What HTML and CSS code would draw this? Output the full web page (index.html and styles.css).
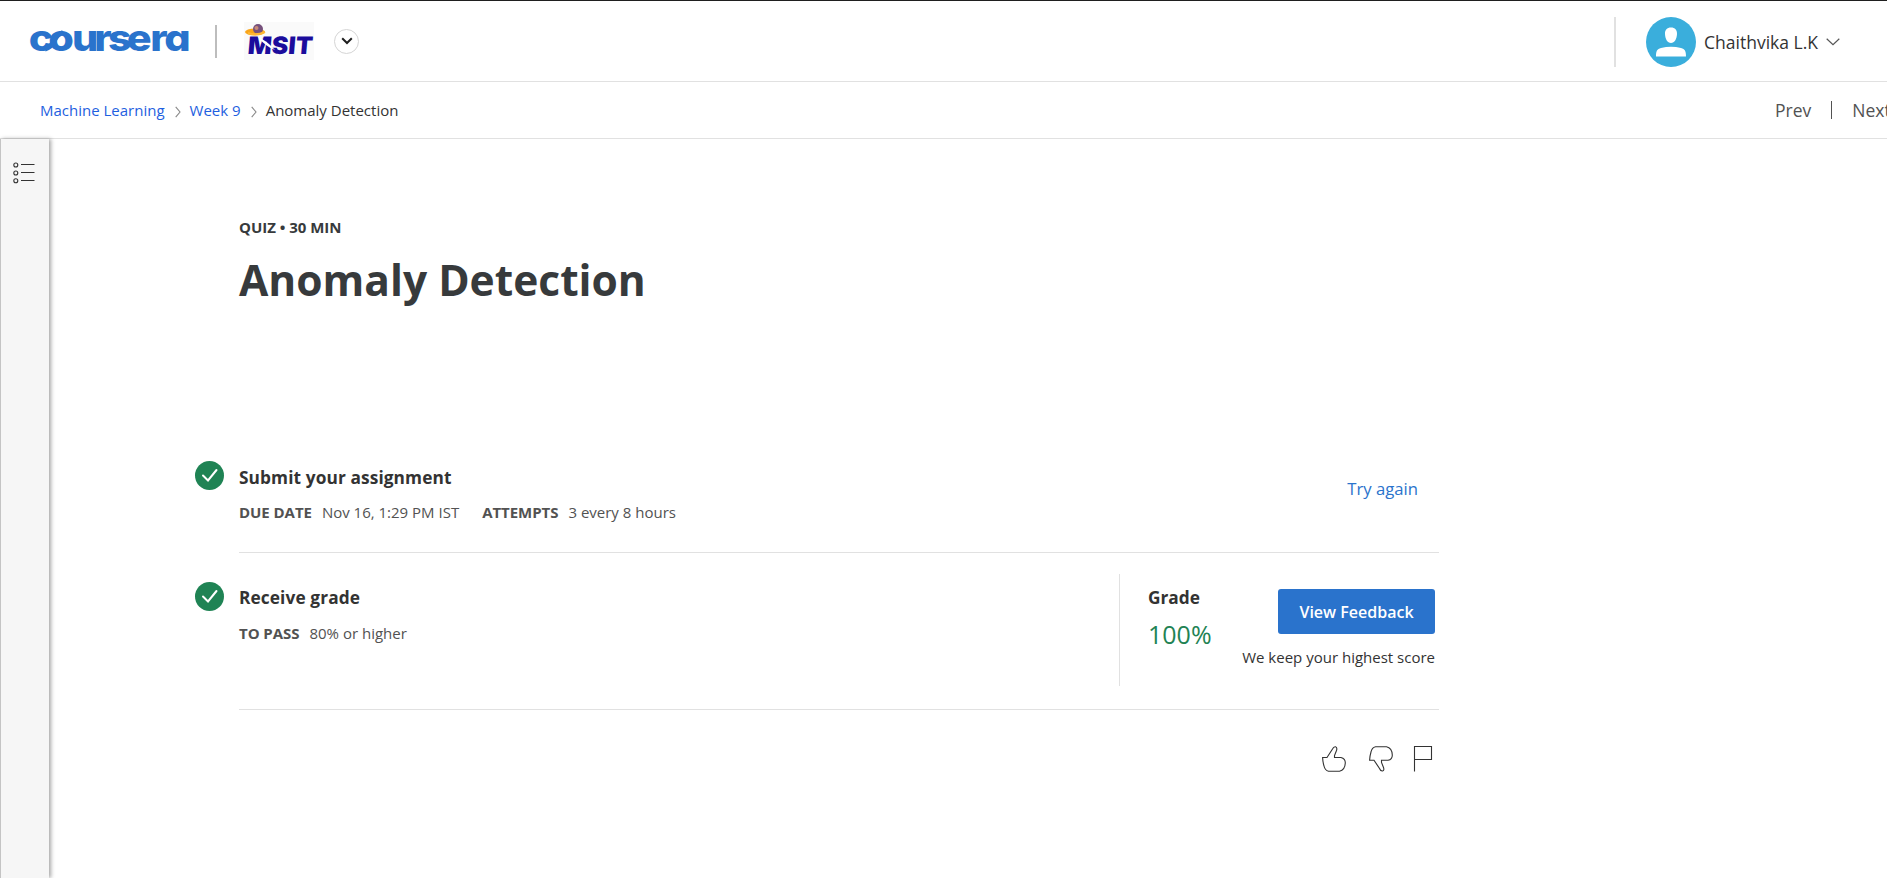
FILE: index.html
```html
<!DOCTYPE html>
<html lang="en">
<head>
<meta charset="utf-8">
<title>Anomaly Detection | Coursera</title>
<link rel="stylesheet" href="styles.css">
</head>
<body>
<header class="header">
  <div class="brand">
    <svg class="logo" width="162" height="30" viewBox="0 0 162 30" aria-label="coursera">
      <text class="wordmark" transform="scale(1.12 1)" y="25" x="-0.300 17.200 38.300 58.200 70.500 87.200 108.300 120.700">coursera</text>
      <path class="ribbon" d="M16 23Q22 21.500 25 15T34 6.500"/>
    </svg>
    <span class="brand-line"></span>
    <svg class="partner" width="70" height="38" viewBox="0 0 70 38" aria-label="MSIT">
      <rect width="70" height="38" fill="#fafafa"/>
      <ellipse cx="11" cy="10" rx="10" ry="3.500" fill="#f9a51a"/>
      <circle cx="14" cy="7" r="5" fill="#76517c"/>
      <circle cx="12.500" cy="6" r="2" fill="#c88a78"/>
      <path d="M4 11Q12 14 21 10" fill="none" stroke="#ffb733" stroke-width="2"/>
      <text class="partner-name" x="6" y="32.500" transform="skewX(-5)" textLength="65" lengthAdjust="spacingAndGlyphs">MSIT</text>
      <path d="M14 15Q22 18 31 28Q22 25 14 15Z" fill="#fff"/>
    </svg>
    <button class="switcher" aria-label="Switch program"><svg width="12" height="8" viewBox="0 0 12 8"><path d="M1.200 1.300L6 6L10.800 1.300"/></svg></button>
  </div>
  <div class="account">
    <svg class="avatar" width="50" height="50" viewBox="0 0 50 50"><circle cx="25" cy="25" r="25" fill="#3aaedc"/><path fill="#fff" d="M25 10.500C29 10.500 31.200 13 31 17C30.800 22 28.500 26 25 26S19.200 22 19 17C18.800 13 21 10.500 25 10.500ZM10 39.500C10 34 11 32 15 31Q25 28.500 35 31C39 32 40 34 40 39.500Z"/></svg>
    <span class="user">Chaithvika L.K</span>
    <svg class="caret" width="14" height="8" viewBox="0 0 14 8"><path d="M.7.800L7 6.700L13.300.800"/></svg>
  </div>
</header>
<nav class="subnav">
  <div class="crumbs">
    <a>Machine Learning</a>
    <svg class="chev" width="6" height="12" viewBox="0 0 6 12"><path d="M.7.800L5 6L.7 11.200"/></svg>
    <a>Week 9</a>
    <svg class="chev" width="6" height="12" viewBox="0 0 6 12"><path d="M.7.800L5 6L.7 11.200"/></svg>
    <span>Anomaly Detection</span>
  </div>
  <div class="pager"><span>Prev</span><i class="pager-line"></i><span>Next</span></div>
</nav>
<div class="body">
  <aside class="rail">
    <svg width="22" height="22" viewBox="0 0 22 22"><g fill="none" stroke="#333" stroke-width="1.100"><circle cx="2.800" cy="3" r="2"/><circle cx="2.800" cy="11" r="2"/><circle cx="2.800" cy="18.700" r="2"/><path d="M8 2.500h13.500M8 10.500h13.500M8 18.500h13.500"/></g></svg>
  </aside>
  <main class="main">
    <p class="kind">QUIZ • 30 MIN</p>
    <h1 class="title">Anomaly Detection</h1>
    <section class="step submit">
      <svg class="check" width="29" height="29" viewBox="0 0 29 29"><circle cx="14.500" cy="14.500" r="14.500"/><path d="M8 14.500L13 19.500L21.500 9"/></svg>
      <div class="info">
        <h2 class="name">Submit your assignment</h2>
        <p class="meta"><b>DUE DATE</b><span>Nov 16, 1:29 PM IST</span><b class="next">ATTEMPTS</b><span>3 every 8 hours</span></p>
      </div>
      <a class="again">Try again</a>
    </section>
    <section class="step receive">
      <svg class="check" width="29" height="29" viewBox="0 0 29 29"><circle cx="14.500" cy="14.500" r="14.500"/><path d="M8 14.500L13 19.500L21.500 9"/></svg>
      <div class="info">
        <h2 class="name">Receive grade</h2>
        <p class="meta"><b>TO PASS</b><span>80% or higher</span></p>
      </div>
      <div class="result">
        <div class="grade"><h2 class="name">Grade</h2><p class="score">100%</p></div>
        <div class="feedback"><button class="view">View Feedback</button><p class="keep">We keep your highest score</p></div>
      </div>
    </section>
    <div class="actions">
      <svg width="24" height="26" viewBox="0 0 24 26"><path d="M.6 11.500H5L10.500 3Q11.500 .6 13.500 .8Q15.500 1.500 14.500 4.500L12.500 9.500V11.500H19Q23.400 12.500 23.300 17Q23 24 17.500 25.200H6.500Q3 24.500 2 20Q.8 16 .6 11.500Z"/></svg>
      <svg width="24" height="26" viewBox="0 0 24 26"><path d="M.6 14.200H5L10.500 22.500Q11.500 25.200 13.500 25Q15.500 24.500 14.500 21.500L12.500 16.500V14.200H19Q23.400 13.500 23.300 9Q23 2 17.500.8H6.500Q3 1.500 2 6Q.8 10 .6 14.200Z"/></svg>
      <svg class="flag" width="19" height="26" viewBox="0 0 19 26"><path d="M.5 25.500V.5H17.500V13.500H.5"/></svg>
    </div>
  </main>
</div>
</body>
</html>
```
FILE: styles.css
```css
* { box-sizing: border-box; }
body { margin: 0; height: 878px; overflow: hidden; background: #fff; color: #333; font-family: "Open Sans", sans-serif; font-size: 15px; }
h1, h2, p { margin: 0; }
svg { display: block; flex: none; overflow: visible; }
button { font-family: inherit; padding: 0; }
.header { display: flex; justify-content: space-between; height: 82px; border-top: 1px solid #1f1f1f; border-bottom: 1px solid #e1e1e1; }
.brand { display: flex; align-items: center; height: 80px; padding-left: 29px; }
.wordmark { font-family: Inter, sans-serif; font-size: 37px; font-weight: 800; font-feature-settings: "cv11"; fill: #2a73cc; }
.ribbon { fill: none; stroke: #2a73cc; stroke-width: 5; }
.brand-line { width: 2px; height: 33px; margin-left: 24px; background: #bdbdbd; }
.partner { margin-left: 27px; }
.partner-name { font-family: Inter, sans-serif; font-size: 24px; font-weight: 900; fill: #1b0c9c; }
.switcher { display: flex; align-items: center; justify-content: center; width: 25px; height: 25px; margin-left: 20px; border: 1px solid #d5d5d5; border-radius: 50%; background: #fff; }
.switcher path { fill: none; stroke: #1f1f1f; stroke-width: 2; }
.account { display: flex; align-items: center; height: 50px; margin-top: 16px; padding-left: 30px; margin-right: 47px; border-left: 2px solid #e1e1e1; font-size: 17.5px; }
.user { margin-left: 8px; white-space: nowrap; }
.caret { margin-left: 8px; }
.caret path { fill: none; stroke: #555; stroke-width: 1.2; }
.subnav { display: flex; justify-content: space-between; height: 57px; border-bottom: 1px solid #e1e1e1; }
.crumbs { display: flex; align-items: center; padding-left: 40px; white-space: nowrap; }
.crumbs a { color: #1f5fe0; }
.chev { margin: 4px 9px 0 10px; }
.chev path { fill: none; stroke: #888; stroke-width: 1.1; }
.pager { display: flex; align-items: center; width: 113px; padding-left: 1px; font-size: 17.5px; color: #525252; white-space: nowrap; }
.pager-line { flex: none; width: 1px; height: 18px; margin: 0 20px; background: #525252; }
.body { display: flex; height: 739px; }
.rail { width: 49px; padding: 23px 0 0 12px; border-left: 1px solid #c4c4c4; background: #f6f6f6; box-shadow: 2px 0 4px rgba(0, 0, 0, .35); }
.main { width: 1244px; margin-left: 146px; }
.kind { margin: 76px 0 0 44px; line-height: 24px; font-weight: 700; letter-spacing: -.02px; color: #373a3c; }
.title { margin: 11px 0 0 44px; line-height: 60px; font-size: 42.5px; font-weight: 700; color: #373a3c; }
.step { display: flex; }
.check { margin-top: 14px; }
.check circle { fill: #1f8354; }
.check path { fill: none; stroke: #fff; stroke-width: 2; stroke-linecap: round; }
.info { flex: 1; padding-top: 19px; }
.submit { height: 106px; margin-top: 137px; }
.submit .info, .receive .info, .receive .result { border-bottom: 1px solid #e1e1e1; }
.step .info { margin-left: 15px; }
.name { line-height: 24px; font-size: 17.3px; font-weight: 700; letter-spacing: .1px; color: #333; }
.meta { display: flex; gap: 10px; margin-top: 10px; line-height: 24px; color: #525252; white-space: nowrap; }
.meta b { font-weight: 700; letter-spacing: -.05px; }
.meta .next { margin-left: 13px; }
.again { padding: 30px 21px 0 0; line-height: 24px; font-size: 16.7px; color: #2a73cc; border-bottom: 1px solid #e1e1e1; }
.receive { height: 157px; }
.receive .check { margin-top: 29px; }
.receive .info { padding-top: 33px; }
.receive .meta { margin-top: 11px; }
.result { display: flex; justify-content: space-between; width: 320px; padding-top: 21px; }
.grade { height: 112px; padding: 12px 0 0 28px; border-left: 1px solid #e1e1e1; }
.grade .name { letter-spacing: 0; }
.score { margin-top: 7px; line-height: 34px; font-size: 25px; color: #1f8354; }
.feedback { display: flex; flex-direction: column; align-items: flex-end; padding: 15px 4px 0 0; }
.view { width: 157px; height: 45px; border: 0; border-radius: 3px; background: #2a73cc; color: #fff; font-size: 16px; font-weight: 600; }
.keep { margin-top: 11px; line-height: 24px; white-space: nowrap; }
.actions { display: flex; justify-content: flex-end; gap: 23px; padding: 36px 6px 0 0; }
.actions path { fill: none; stroke: #333; stroke-width: 1.1; }
.actions .flag { margin-left: -2px; }
```
